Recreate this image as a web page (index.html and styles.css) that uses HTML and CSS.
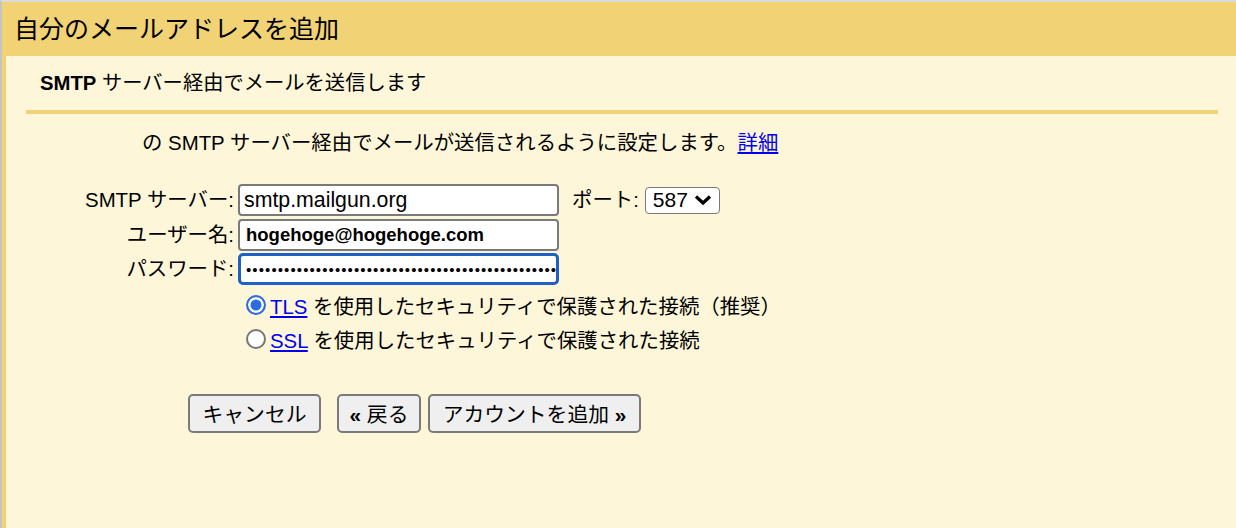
FILE: index.html
```html
<!DOCTYPE html>
<html lang="ja">
<head>
    <meta charset="UTF-8">
    <title>自分のメールアドレスを追加</title>
    <link rel="stylesheet" href="styles.css">
</head>
<body>
    <div class="dialog">
        <header class="dialog-title">自分のメールアドレスを追加</header>

        <div class="dialog-body">
            <h2 class="step-title"><b>SMTP</b> サーバー経由でメールを送信します</h2>
            <div class="divider"></div>

            <p class="info">の SMTP サーバー経由でメールが送信されるように設定します。<a href="#">詳細</a></p>

            <div class="form">
                <div class="form-row">
                    <label class="field-label">SMTP サーバー:</label>
                    <input class="field" type="text" value="smtp.mailgun.org">
                    <span class="port-label">ポート:</span>
                    <span class="select">587
                        <svg width="18" height="12" viewBox="0 0 18 12"><path d="M2 2.5 L9 9 L16 2.5" fill="none" stroke="#000" stroke-width="3.2"/></svg>
                    </span>
                </div>
                <div class="form-row">
                    <label class="field-label">ユーザー名:</label>
                    <input class="field field-user" type="text" value="hogehoge@hogehoge.com">
                </div>
                <div class="form-row">
                    <label class="field-label">パスワード:</label>
                    <input class="field field-pass focused" type="password" value="passwordpasswordpasswordpasswordpasswordpasswordpasswordpassword">
                </div>

                <div class="radio-row">
                    <span class="radio checked"></span>
                    <span><a href="#">TLS</a> を使用したセキュリティで保護された接続（推奨）</span>
                </div>
                <div class="radio-row">
                    <span class="radio"></span>
                    <span><a href="#">SSL</a> を使用したセキュリティで保護された接続</span>
                </div>
            </div>

            <div class="buttons">
                <button class="btn btn-cancel">キャンセル</button>
                <button class="btn btn-back"><b>«</b> 戻る</button>
                <button class="btn btn-add">アカウントを追加 <b>»</b></button>
            </div>
        </div>
    </div>
</body>
</html>
```

FILE: styles.css
```css
html, body {
    height: 100%;
}

body {
    margin: 0;
    font-family: "Liberation Sans", "Noto Sans CJK JP", sans-serif;
    font-size: 20.4px;
    color: #000;
    background: #fdf6d9;
    border-top: 2px solid #d9dadc;
    border-left: 2px solid #c4c4c4;
    box-sizing: border-box;
    overflow: hidden;
}

.dialog {
    height: 100%;
    border-left: 4px solid #f1d274;
    background: #fdf6d9;
}

.dialog-title {
    height: 54px;
    margin-left: -4px;
    padding-left: 12px;
    display: flex;
    align-items: center;
    background: #f1d274;
    font-size: 25px;
    line-height: 30px;
}

.dialog-body {
    padding: 15px 18px 0 20px;
}

.step-title {
    margin: 0;
    padding-left: 14px;
    font-size: 20.3px;
    font-weight: normal;
    line-height: 24px;
}

.step-title b {
    font-weight: bold;
}

.divider {
    height: 4px;
    margin-top: 15px;
    background: #f1d274;
}

.info {
    margin: 17px 0 0 116px;
    line-height: 24px;
}

a {
    color: #0000ee;
    text-decoration: underline;
}

.form {
    margin-top: 29px;
}

.form-row {
    display: flex;
    align-items: center;
    margin-bottom: 2.5px;
}

.field-label {
    width: 208px;
    margin-right: 4px;
    text-align: right;
    line-height: 24px;
}

.field {
    width: 321px;
    height: 32px;
    box-sizing: border-box;
    margin: 0;
    padding: 0 4px;
    border: 2px solid #7a7a7a;
    border-radius: 4px;
    background: #fff;
    font-family: "Liberation Sans", sans-serif;
    font-size: 21.3px;
    color: #000;
    outline: none;
}

.field-user {
    padding-left: 6px;
    font-size: 18.5px;
    font-weight: bold;
}

.field-pass {
    padding: 0 0 0 5px;
    font-size: 15px;
    letter-spacing: 1.1px;
}

.focused {
    border: 3px solid #1f5fc8;
    border-radius: 5px;
}

.port-label {
    margin-left: 13px;
    line-height: 24px;
}

.select {
    display: inline-flex;
    align-items: center;
    gap: 6px;
    height: 27px;
    box-sizing: border-box;
    margin-left: 6px;
    padding: 0 7px 0 7px;
    border: 1.5px solid #7a7a7a;
    border-radius: 4px;
    background: #fff;
    font-size: 21px;
    line-height: 24px;
}

.radio-row {
    display: flex;
    align-items: center;
    gap: 4px;
    height: 34px;
    margin-left: 220px;
}

.radio {
    width: 16px;
    height: 16px;
    border: 2px solid #767676;
    border-radius: 50%;
    background: #fff;
}

.radio.checked {
    border-color: #2c6ee0;
    background: #2c6ee0;
    box-shadow: inset 0 0 0 2.5px #fff;
}

.buttons {
    display: flex;
    margin: 38px 0 0 162px;
}

.btn {
    height: 39px;
    box-sizing: border-box;
    padding: 0;
    border: 2px solid #7a7a7a;
    border-radius: 5px;
    background: #efefef;
    font-family: "Liberation Sans", "Noto Sans CJK JP", sans-serif;
    font-size: 20.8px;
    color: #000;
}

.btn-cancel {
    width: 133px;
}

.btn-back {
    width: 84px;
    margin-left: 16px;
}

.btn-add {
    width: 213px;
    margin-left: 7px;
}
```
